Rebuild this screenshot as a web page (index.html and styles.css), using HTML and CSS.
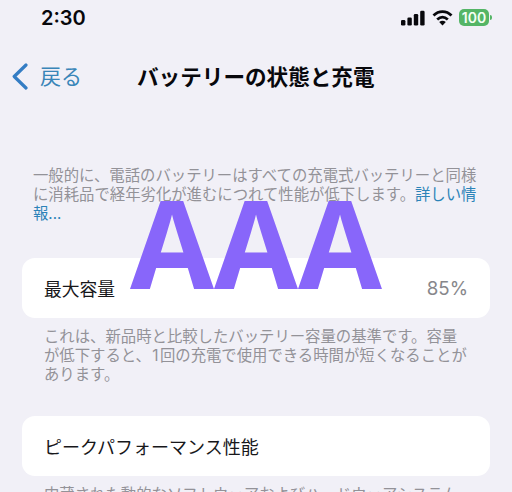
FILE: index.html
```html
<!DOCTYPE html>
<html lang="ja">
<head>
<meta charset="utf-8">
<title>バッテリーの状態と充電</title>
<link rel="stylesheet" href="styles.css">
</head>
<body>
<main class="screen">
  <header class="status">
    <span class="time">2:30</span>
    <div class="indicators">
      <svg class="signal" width="24" height="16" viewBox="0 0 24 16"><rect x="0" y="10" width="4.4" height="5.5" rx="1.3"/><rect x="6.4" y="7.4" width="4.4" height="8.1" rx="1.3"/><rect x="12.8" y="4" width="4.4" height="11.5" rx="1.3"/><rect x="19.2" y=".7" width="4.4" height="14.8" rx="1.3"/></svg>
      <svg class="wifi" width="21" height="16" viewBox="0 0 21 16"><path d="M1.5 5.5C6.7 .3 14.3 .3 19.5 5.5M5.2 9.5c3.3-3 7.3-3 10.6 0" fill="none" stroke="#08080c" stroke-width="2.8"/><path d="M7.2 12.1q3.3-2.5 6.6 0L10.5 15.5z"/></svg>
      <div class="battery"><span class="level">100</span><i class="cap"></i></div>
    </div>
  </header>
  <nav class="nav">
    <a class="back"><svg width="16" height="27" viewBox="0 0 16 27"><path d="M14 2 2.2 13.5 14 25" fill="none" stroke="#347dc4" stroke-width="3.2" stroke-linecap="round" stroke-linejoin="round"/></svg><span>戻る</span></a>
    <h1 class="title">バッテリーの状態と充電</h1>
  </nav>
  <p class="note intro">一般的に、電話のバッテリーはすべての充電式バッテリーと同様<br>に消耗品で経年劣化が進むにつれて性能が低下します。<a class="link">詳しい情<br>報...</a></p>
  <section class="card"><span>最大容量</span><span class="value">85%</span></section>
  <p class="note detail">これは、新品時と比較したバッテリー容量の基準です。容量<br>が低下すると、<span class="digit">1</span>回の充電で使用できる時間が短くなることが<br>あります。</p>
  <section class="card"><span class="peak">ピークパフォーマンス性能</span></section>
  <p class="note detail last">内蔵された動的なソフトウェアおよびハードウェアシステム</p>
  <div class="overlay">AAA</div>
</main>
</body>
</html>
```
FILE: styles.css
```css
* { box-sizing: border-box; }
body { margin: 0; background: #f1f0f7; font-family: "Noto Sans CJK JP", sans-serif; color: #17171a; }
.screen { position: relative; width: 512px; height: 492px; overflow: hidden; }
.status { display: flex; justify-content: space-between; align-items: center; height: 34px; padding: 1px 20px 0 41px; }
.time { font: 600 20px/32px Inter, sans-serif; color: #08080c; }
.indicators { display: flex; align-items: center; fill: #08080c; }
.signal { margin-right: 1px; }
.wifi { margin: 0 6px; }
.battery { position: relative; display: flex; align-items: center; justify-content: center; width: 30px; height: 17px; border-radius: 5px; background: #54b566; margin-right: 3px; }
.level { font: 600 14px/17px Inter, sans-serif; color: #f4fff5; }
.cap { position: absolute; left: 31px; top: 6px; width: 2px; height: 5px; border-radius: 0 2px 2px 0; background: #54b566; }
.nav { display: flex; align-items: center; height: 84px; padding-left: 12px; }
.back { display: flex; align-items: center; gap: 12px; width: 125px; font-size: 21px; line-height: 30px; color: #3985b8; }
.back span { margin-top: -2px; }
.title { margin: 0; font-size: 21.6px; line-height: 32px; font-weight: 700; color: #08080c; white-space: nowrap; }
.note { margin: 0; font-size: 15.37px; line-height: 19.2px; color: #939298; white-space: nowrap; }
.intro { height: 140px; padding: 47px 0 0 33px; }
.link { color: #2c83b8; }
.card { display: flex; justify-content: space-between; align-items: center; height: 60px; margin: 0 22px; padding: 0 22px 1px; border-radius: 13px; background: #fff; font-size: 17.8px; line-height: 26px; }
.peak { font-size: 18px; }
.value { padding-top: 2px; font-family: Inter, sans-serif; font-size: 18.7px; color: #87878b; }
.detail { height: 98px; padding: 8px 0 0 44px; line-height: 19px; }
.digit { display: inline-block; width: 9px; font-family: Inter, sans-serif; line-height: 1; text-align: center; }
.overlay { position: absolute; left: 130px; top: 198px; font: 700 121.7px/88px "Open Sans", sans-serif; color: #8866fa; }
```
